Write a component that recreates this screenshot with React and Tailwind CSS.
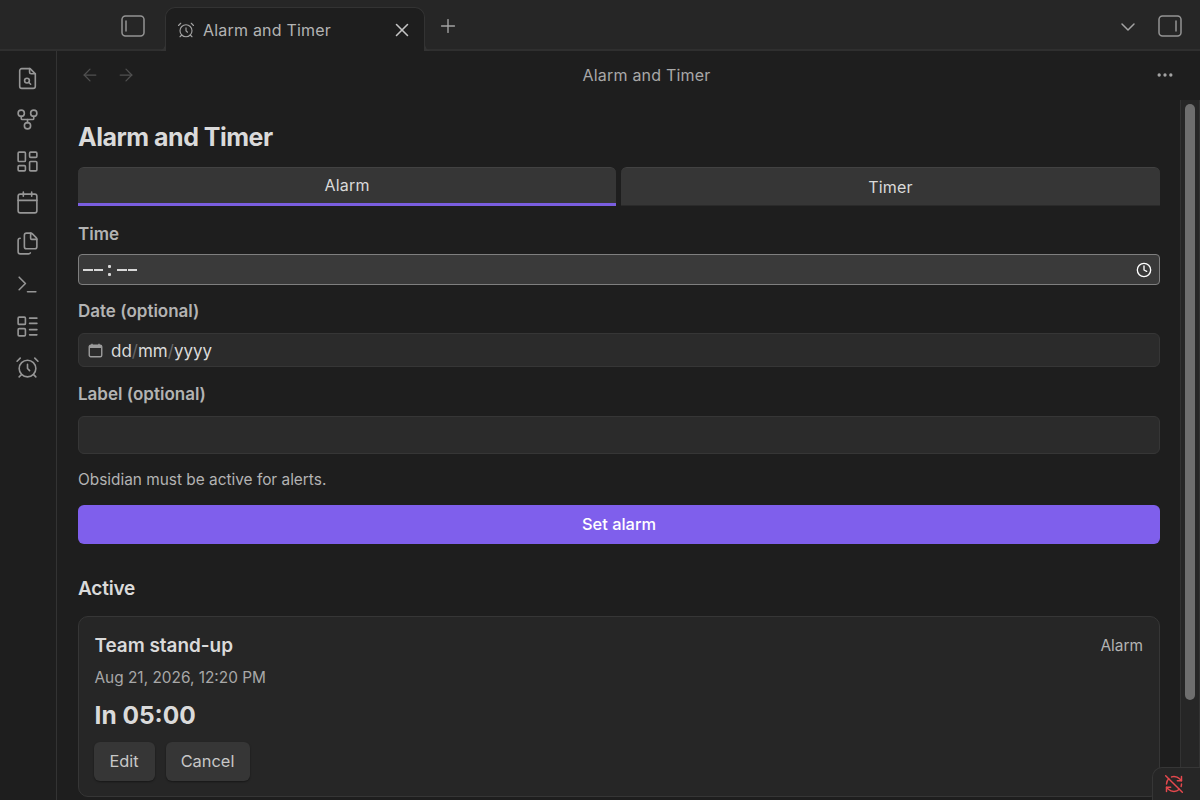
import React from "react";
import { GitFork, LayoutDashboard, Calendar, Files, Terminal, LayoutList, AlarmClock, ArrowLeft, ArrowRight, X, Plus, ChevronDown, Ellipsis, Clock, RefreshCwOff } from "lucide-react";

function FileFind({ size = 26, strokeWidth = 1.6 }) {
  return (
    <svg width={size} height={size} viewBox="0 0 24 24" fill="none" stroke="currentColor" strokeWidth={strokeWidth} strokeLinecap="round" strokeLinejoin="round">
      <path d="M14.5 2.5H6.5a2 2 0 0 0-2 2v15a2 2 0 0 0 2 2h11a2 2 0 0 0 2-2V7.5z" />
      <path d="M14 2.5v3.5a1.5 1.5 0 0 0 1.5 1.5h4" />
      <circle cx="11.5" cy="14" r="2.3" />
      <path d="m13.3 15.8 1.7 1.7" />
    </svg>
  );
}

function SidePanel({ side }) {
  const x = side === "left" ? 5 : 18;
  return (
    <svg width="24" height="22" viewBox="0 0 24 22" fill="none" stroke="currentColor" strokeLinecap="round">
      <rect x="1" y="1" width="22" height="20" rx="3.5" strokeWidth="1.5" />
      <path d={`M${x} 6v10`} strokeWidth="1.5" />
    </svg>
  );
}

function DateIcon() {
  return (
    <svg width="15" height="15" viewBox="0 0 15 15" fill="none" stroke="#9c9c9c">
      <rect x="1.25" y="2.25" width="12.5" height="11.5" rx="1.5" strokeWidth="1.4" />
      <rect x="1.5" y="2.5" width="12" height="2.5" fill="#9c9c9c" stroke="none" />
      <path d="M4 0.8v2M11 0.8v2" strokeWidth="1.4" />
    </svg>
  );
}

function Dashes({ className = "" }) {
  return (
    <span className={`flex gap-[1px] ${className}`}>
      <span className="w-[9.5px] h-[2px] bg-[#d8d8d8]" />
      <span className="w-[9.5px] h-[2px] bg-[#d8d8d8]" />
    </span>
  );
}

const ribbon = [FileFind, GitFork, LayoutDashboard, Calendar, Files, Terminal, LayoutList, AlarmClock];

function Label({ children, className = "" }) {
  return <div className={`text-[17px] leading-[20px] font-semibold text-[#b3b3b3] ${className}`}>{children}</div>;
}

export default function App() {
  return (
    <div className="w-[1200px] h-[800px] overflow-hidden relative bg-[#1e1e1e] text-[#dadada] flex flex-col font-['Inter',sans-serif]">
      {/* Top bar */}
      <div className="h-[51px] shrink-0 bg-[#262626] border-b-2 border-[#2f2f2f] flex items-end relative">
        <div className="w-[121px] shrink-0" />
        <div className="w-[44px] h-[49px] shrink-0 pt-[15px] text-[#949494]">
          <SidePanel side="left" />
        </div>
        <div className="w-[260px] h-[44px] -mb-[2px] shrink-0 bg-[#1e1e1e] border border-b-0 border-[#333333] rounded-t-[10px] flex items-center pl-[11px] pr-[11px] text-[#b3b3b3] relative">
          <div className="absolute -left-[7px] bottom-0 w-[6px] h-[6px] bg-[radial-gradient(circle_at_0_0,transparent_5.5px,#333333_6px)]" />
          <div className="absolute -right-[7px] bottom-0 w-[6px] h-[6px] bg-[radial-gradient(circle_at_100%_0,transparent_5.5px,#333333_6px)]" />
          <AlarmClock size={18} strokeWidth={1.5} className="text-[#a3a3a3]" />
          <span className="ml-[8px] text-[16px] leading-[20px] tracking-[0.2px] flex-1">Alarm and Timer</span>
          <X size={22} strokeWidth={1.7} className="text-[#c4c4c4]" />
        </div>
        <div className="ml-[12px] h-[49px] pt-[15px] text-[#a3a3a3]"><Plus size={22} strokeWidth={1.5} /></div>
        <div className="flex-1" />
        <div className="h-[49px] pt-[15px] text-[#a3a3a3] mr-[18px]"><ChevronDown size={24} strokeWidth={1.5} /></div>
        <div className="h-[49px] pt-[15px] text-[#949494] mr-[18px]"><SidePanel side="right" /></div>
      </div>

      <div className="flex-1 flex min-h-0">
        {/* Ribbon */}
        <div className="w-[57px] shrink-0 border-r border-[#333333] bg-[#1e1e1e] flex flex-col items-center pt-[15px] pr-[1px] gap-[16.3px] text-[#969696]">
          {ribbon.map((I, i) => <I key={i} size={25} strokeWidth={1.55} />)}
        </div>

        {/* Main */}
        <div className="flex-1 flex flex-col min-w-0">
          <div className="h-[49px] shrink-0 flex items-center pl-[23px] pr-[25px] pb-[1px]">
            <ArrowLeft size={20} strokeWidth={1.5} className="text-[#505050]" />
            <ArrowRight size={20} strokeWidth={1.5} className="text-[#505050] ml-[16px]" />
            <div className="flex-1 text-center text-[16px] leading-[20px] tracking-[0.2px] text-[#a8a8a8] pl-[2px]">Alarm and Timer</div>
            <Ellipsis size={20} strokeWidth={2} className="text-[#a3a3a3]" />
          </div>

          <div className="flex-1 flex min-h-0">
            <div className="flex-1 pl-[21px] pr-[20px] min-w-0">
              <h1 className="mt-[21px] text-[25px] leading-[32px] font-bold tracking-[-0.5px] text-[#dadada]">Alarm and Timer</h1>

              <div className="mt-[14px] flex gap-[5px]">
                <div className="w-[538px] h-[39px] bg-[#363636] rounded-t-[6px] border-t border-[#424242] border-b-[3px] border-b-[#7a5ee0] flex items-center justify-center text-[16px] tracking-[0.2px] text-[#dadada] pb-[1px]">Alarm</div>
                <div className="flex-1 h-[39px] bg-[#363636] rounded-t-[6px] border-t border-[#424242] border-b border-b-[#2a2a2a] flex items-center justify-center text-[16px] tracking-[0.2px] text-[#dadada]">Timer</div>
              </div>

              <Label className="mt-[18px]">Time</Label>
              <div className="mt-[10px] h-[31px] bg-[#3a3a3a] border-[1.5px] border-[#7f7f7f] rounded-[4px] flex items-center pl-[4px] pr-[7px]">
                <div className="flex-1 flex items-center pt-[1px]">
                  <Dashes />
                  <span className="ml-[5px] w-[3px] flex flex-col gap-[5px]">
                    <span className="h-[3px] bg-[#d8d8d8] rounded-[1px]" />
                    <span className="h-[3px] bg-[#d8d8d8] rounded-[1px]" />
                  </span>
                  <Dashes className="ml-[6px]" />
                </div>
                <Clock size={16} strokeWidth={2} className="text-white" />
              </div>

              <Label className="mt-[16px]">Date (optional)</Label>
              <div className="mt-[12px] h-[34px] bg-[#2b2b2b] border border-[#363636] rounded-[6px] flex items-center pl-[9px] text-[17px]">
                <DateIcon />
                <span className="ml-[8px] text-[#dadada] leading-[24px] pt-[2px]">dd<span className="text-[#666666]">/</span>mm<span className="text-[#666666]">/</span>yyyy</span>
              </div>

              <Label className="mt-[17px]">Label (optional)</Label>
              <div className="mt-[12px] h-[38px] bg-[#2b2b2b] border border-[#363636] rounded-[6px]" />

              <div className="mt-[16px] text-[15.4px] leading-[20px] text-[#b3b3b3]">Obsidian must be active for alerts.</div>

              <div className="mt-[15px] h-[39px] bg-[#7f5fec] rounded-[6px] flex items-center justify-center text-[16.4px] font-medium text-white">Set alarm</div>

              <div className="mt-[33px] text-[19px] leading-[24px] font-semibold text-[#dadada] tracking-[-0.2px]">Active</div>

              <div className="mt-[15px] h-[181px] bg-[#262626] border border-[#363636] rounded-[10px] pt-[17px] pl-[15.5px] pr-[16px]">
                <div className="flex justify-between items-center">
                  <span className="text-[18.9px] leading-[24px] font-semibold text-[#dadada]">Team stand-up</span>
                  <span className="text-[15.4px] text-[#b3b3b3]">Alarm</span>
                </div>
                <div className="mt-[10px] text-[15.4px] leading-[20px] text-[#a8a8a8]">Aug 21, 2026, 12:20 PM</div>
                <div className="mt-[11px] text-[24.5px] leading-[32px] font-bold text-[#dadada]">In 05:00</div>
                <div className="mt-[11px] -ml-[1px] flex gap-[11px]">
                  <div className="h-[39px] w-[61px] bg-[#363636] rounded-[6px] shadow-[0_1px_2px_rgba(0,0,0,0.4)] flex items-center justify-center text-[16.4px] text-[#c8c8c8]">Edit</div>
                  <div className="h-[39px] w-[84px] bg-[#363636] rounded-[6px] shadow-[0_1px_2px_rgba(0,0,0,0.4)] flex items-center justify-center text-[16.4px] text-[#c8c8c8]">Cancel</div>
                </div>
              </div>
            </div>

            {/* Scrollbar */}
            <div className="w-[20px] shrink-0 bg-[#262626] border-x border-[#333333] px-[4px] pt-[4px]">
              <div className="h-[596px] w-full bg-[#6e6e6e] rounded-full" />
            </div>
          </div>
        </div>
      </div>

      {/* Status bar overlay */}
      <div className="absolute right-0 bottom-0 w-[48px] h-[33px] bg-[#262626] border-l border-t border-[#363636] rounded-tl-[10px] flex items-center justify-center pr-[5px] text-[#e5484d]">
        <RefreshCwOff size={20} strokeWidth={1.75} />
      </div>
    </div>
  );
}
